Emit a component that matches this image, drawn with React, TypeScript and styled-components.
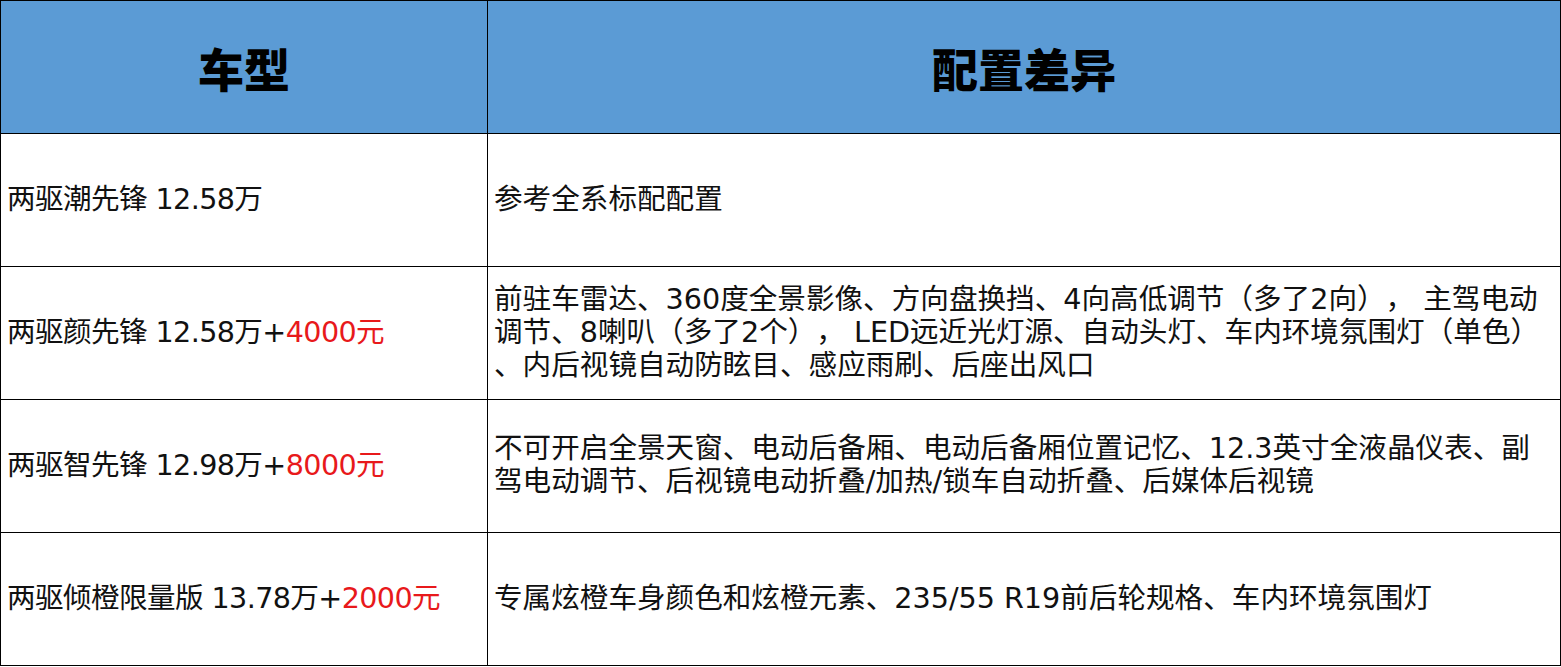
import styled, { createGlobalStyle } from 'styled-components'

const GlobalStyle = createGlobalStyle`
  html, body {
    margin: 0;
    padding: 0;
    background: #ffffff;
  }
  body {
    font-family: "Noto Sans CJK SC", "Noto Sans", sans-serif;
  }
`

interface IRow {
  name: string
  price: string
  extra?: string
  lines: string[]
}

const rows: IRow[] = [
  { name: '两驱潮先锋', price: '12.58万', lines: ['参考全系标配配置'] },
  {
    name: '两驱颜先锋',
    price: '12.58万',
    extra: '4000元',
    lines: [
      '前驻车雷达、360度全景影像、方向盘换挡、4向高低调节（多了2向）， 主驾电动',
      '调节、8喇叭（多了2个）， LED远近光灯源、自动头灯、车内环境氛围灯（单色）',
      '、内后视镜自动防眩目、感应雨刷、后座出风口',
    ],
  },
  {
    name: '两驱智先锋',
    price: '12.98万',
    extra: '8000元',
    lines: [
      '不可开启全景天窗、电动后备厢、电动后备厢位置记忆、12.3英寸全液晶仪表、副',
      '驾电动调节、后视镜电动折叠/加热/锁车自动折叠、后媒体后视镜',
    ],
  },
  {
    name: '两驱倾橙限量版',
    price: '13.78万',
    extra: '2000元',
    lines: ['专属炫橙车身颜色和炫橙元素、235/55 R19前后轮规格、车内环境氛围灯'],
  },
]

const Table = styled.table`
  width: 1561px;
  border-collapse: collapse;
  table-layout: fixed;
  color: #000;
`

const HeadCell = styled.th<{ $w?: number }>`
  width: ${({ $w }) => ($w ? `${$w}px` : 'auto')};
  height: 132px;
  padding: 0;
  background: #5b9bd5;
  border: 1px solid #000;
  font-size: 46px;
  font-weight: 900;
  text-align: center;
  vertical-align: middle;
`

const Cell = styled.td<{ $tight?: boolean }>`
  height: 130px;
  padding: 0 0 2px 6px;
  border: 1px solid #000;
  font-family: "DejaVu Sans", "Noto Sans CJK SC", sans-serif;
  font-size: 28.6px;
  line-height: 33px;
  letter-spacing: ${({ $tight }) => ($tight ? '-0.6px' : '0')};
  vertical-align: middle;
  white-space: pre;
  overflow: hidden;
  text-spacing-trim: space-all;
  color: #111;
`

const Line = styled.div`
  height: 33px;
`

const Red = styled.span`
  color: #e8191b;
`

export default function App() {
  return (
    <>
      <GlobalStyle />
      <Table>
        <thead>
          <tr>
            <HeadCell $w={486}>车型</HeadCell>
            <HeadCell>配置差异</HeadCell>
          </tr>
        </thead>
        <tbody>
          {rows.map((r) => (
            <tr key={r.name}>
              <Cell $tight>
                {r.name} {r.price}
                {r.extra && (
                  <>
                    +<Red>{r.extra}</Red>
                  </>
                )}
              </Cell>
              <Cell>
                {r.lines.map((l, i) => (
                  <Line key={i}>{l}</Line>
                ))}
              </Cell>
            </tr>
          ))}
        </tbody>
      </Table>
    </>
  )
}
